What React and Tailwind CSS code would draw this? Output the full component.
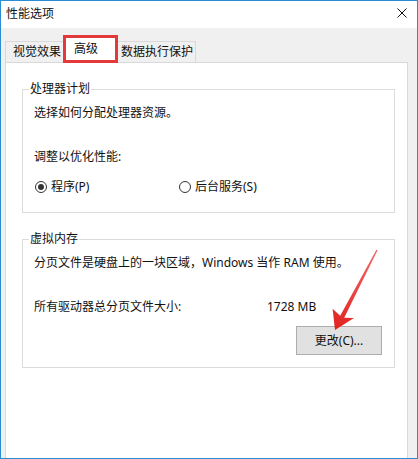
const font = { fontFamily: '"Noto Sans", "Noto Sans CJK SC", sans-serif' };

const Radio = ({ checked, label, className = '' }) => (
  <div className={`flex items-center gap-[4px] ${className}`}>
    <span className="w-[12px] h-[12px] rounded-full border border-[#333] bg-white flex items-center justify-center">
      {checked && <span className="w-[6px] h-[6px] rounded-full bg-[#333]" />}
    </span>
    <span>{label}</span>
  </div>
);

const GroupBox = ({ title, className = '', children }) => (
  <fieldset className={`ml-[16px] w-[373px] border border-[#dcdcdc] pl-[6px] pr-0 ${className}`}>
    <legend className="px-[1px] leading-[16px]">{title}</legend>
    <div className="pl-[5px] flex flex-col">{children}</div>
  </fieldset>
);

export default function App() {
  return (
    <div
      className="relative w-[418px] h-[459px] border border-[#2a8dd4] bg-[#f0f0f0] flex flex-col text-[12px] leading-[16px] text-[#111]"
      style={font}
    >
      {/* title bar */}
      <div className="h-[27px] bg-white flex items-center justify-between pl-[5px] pr-[10px]">
        <span className="-mt-[2px]">性能选项</span>
        <svg width="10" height="10" viewBox="0 0 10 10" className="-mt-[3px]">
          <path d="M0.5 0.5 L9.5 9.5 M9.5 0.5 L0.5 9.5" stroke="#111" strokeWidth="1" />
        </svg>
      </div>

      <div className="flex-1 flex flex-col pl-[4px] pr-[9px]">
        {/* tabs */}
        <div className="flex items-end pt-[7px] -mb-px relative z-10">
          <div className="w-[58px] h-[21px] border border-b-0 border-r-0 border-[#d9d9d9] bg-[#f0f0f0] pl-[7px] flex items-center mb-px">
            视觉效果
          </div>
          <div className="w-[55px] h-[28px] border-[3px] border-[#e3393b] bg-white pl-[8px] flex items-center">
            高级
          </div>
          <div className="w-[78px] h-[21px] border border-b-0 border-l-0 border-[#d9d9d9] bg-[#f0f0f0] pl-[3px] flex items-center mb-px">
            数据执行保护
          </div>
        </div>

        {/* panel */}
        <div className="flex-1 bg-white border border-b-0 border-[#d9d9d9] w-[403px]">
          <GroupBox title="处理器计划" className="mt-[18px] pb-[17px]">
            <p className="mt-[8px]">选择如何分配处理器资源。</p>
            <p className="mt-[28px]">调整以优化性能:</p>
            <div className="mt-[14px] flex items-center pl-[1px]">
              <Radio checked label="程序(P)" className="w-[144px]" />
              <Radio label="后台服务(S)" />
            </div>
          </GroupBox>

          <GroupBox title="虚拟内存" className="mt-[18px] pb-[12px]">
            <p className="mt-[8px]">分页文件是硬盘上的一块区域，Windows 当作 RAM 使用。</p>
            <div className="mt-[28px] flex">
              <span className="w-[233px]">所有驱动器总分页文件大小:</span>
              <span>1728 MB</span>
            </div>
            <button className="mt-[11px] self-end mr-[12px] w-[86px] h-[29px] bg-[#e1e1e1] border border-[#adadad] flex items-center justify-center">
              更改(C)...
            </button>
          </GroupBox>
        </div>
      </div>

      {/* red annotation arrow */}
      <svg
        className="absolute left-0 top-0 w-[416px] h-[457px] pointer-events-none"
        viewBox="1 1 416 457"
      >
        <defs>
          <linearGradient id="ar" x1="377" y1="250" x2="335" y2="330" gradientUnits="userSpaceOnUse">
            <stop offset="0" stopColor="#f26a6a" />
            <stop offset="1" stopColor="#e0221f" />
          </linearGradient>
        </defs>
        <polygon
          points="377.6,250.3 344.2,317.8 354,318 335,330 332.6,308.8 340.2,315.8 376.4,249.7"
          fill="url(#ar)"
        />
      </svg>
    </div>
  );
}
